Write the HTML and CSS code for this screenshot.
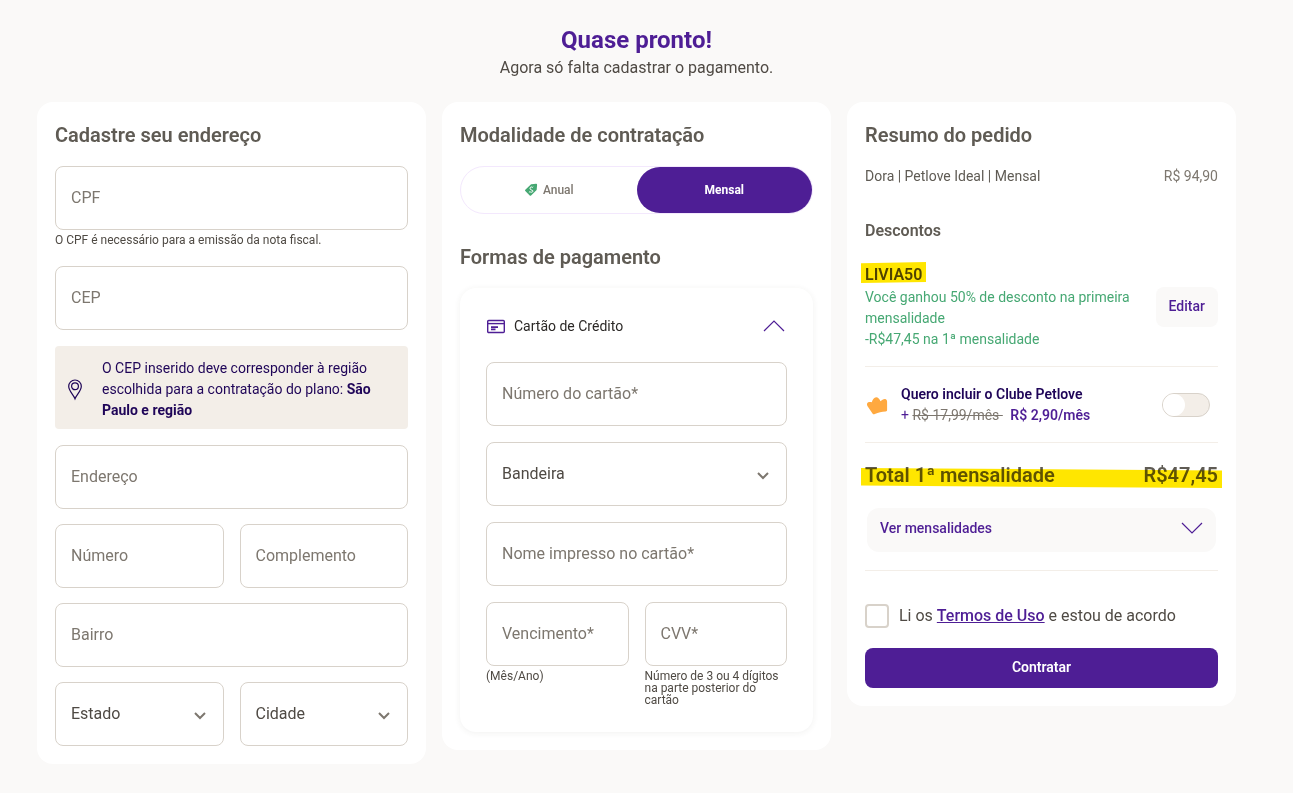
FILE: index.html
```html
<!DOCTYPE html>
<html lang="pt-BR">
	<head>
		<meta charset="UTF-8">
		<meta name="viewport" content="width=device-width, initial-scale=1.0">
		<title>Pagamento</title>
		<link rel="stylesheet" href="styles.css">
	</head>
	<body>

	<header class="pageHeader">
		<h1>Quase pronto!</h1>
		<p>Agora só falta cadastrar o pagamento.</p>
	</header>

	<main class="columns">

		<!-- endereco -->
		<section class="card">
			<h2>Cadastre seu endereço</h2>
			<input class="field" type="text" aria-label="CPF" placeholder="CPF">
			<p class="hint">O CPF é necessário para a emissão da nota fiscal.</p>
			<input class="field cep" type="text" aria-label="CEP" placeholder="CEP">

			<div class="notice">
				<svg class="pin" width="16" height="22" viewBox="0 0 16 22" fill="none" stroke="#1f0558" stroke-width="1.2">
					<path d="M8 19.800C6.500 15.800 1.700 12 1.700 7.300a6.300 6.300 0 0 1 12.600 0c0 4.700-4.800 8.500-6.300 12.500z"/>
					<circle cx="8" cy="7.300" r="3.400"/>
				</svg>
				<p>O CEP inserido deve corresponder à região escolhida para a contratação do plano: <b>São Paulo e região</b></p>
			</div>

			<div class="addressFields">
				<input class="field" type="text" aria-label="Endereço" placeholder="Endereço">
				<div class="pair">
					<input class="field" type="text" aria-label="Número" placeholder="Número">
					<input class="field" type="text" aria-label="Complemento" placeholder="Complemento">
				</div>
				<input class="field" type="text" aria-label="Bairro" placeholder="Bairro">
				<div class="pair">
					<div class="selectBox">
						<select class="field" aria-label="Estado"><option>Estado</option></select>
						<svg width="12" height="8" viewBox="0 0 12 8"><path d="M1 1l5 5 5-5"/></svg>
					</div>
					<div class="selectBox">
						<select class="field" aria-label="Cidade"><option>Cidade</option></select>
						<svg width="12" height="8" viewBox="0 0 12 8"><path d="M1 1l5 5 5-5"/></svg>
					</div>
				</div>
			</div>
		</section>

		<!-- pagamento -->
		<section class="card">
			<h2>Modalidade de contratação</h2>
			<div class="switcher">
				<button type="button">
					<svg width="14" height="14" viewBox="0 0 14 14">
						<path d="M7.500 1.200L12 .8a1 1 0 0 1 1.100 1.100l-.4 4.600c0 .3-.1.500-.3.700l-5.300 5.300a1 1 0 0 1-1.400 0L1.300 8.100a1 1 0 0 1 0-1.400l5.500-5.200c.2-.2.400-.3.700-.3z" fill="#46a873"/>
						<path d="M8.600 4.300C7 3.300 5.300 4.700 6.200 6.100s2.900.8 2.700 2.100-2 1.300-3.200.4M9.100 3.800l-.7.7M5.700 8.900l-.8.700" fill="none" stroke="#fff" stroke-width="1"/>
					</svg>
					Anual
				</button>
				<button type="button" class="active">Mensal</button>
			</div>

			<h2 class="payTitle">Formas de pagamento</h2>
			<div class="payBox">
				<button type="button" class="payHead">
					<svg width="20" height="20" viewBox="0 0 20 20" fill="none" stroke="#4e1e95" stroke-width="1.400">
						<rect x="1.700" y="4.500" width="16.600" height="12" rx="1"/>
						<path d="M2 7.600h16"/>
						<path d="M5 11.200h7M5 13.400h4.500" stroke-width="1.800"/>
					</svg>
					<span>Cartão de Crédito</span>
					<svg class="arrow" width="22" height="12" viewBox="0 0 22 12"><path d="M1 11L11 1l10 10"/></svg>
				</button>

				<div class="payFields">
					<input class="field" type="text" aria-label="Número do cartão" placeholder="Número do cartão*">
					<div class="selectBox">
						<select class="field" aria-label="Bandeira"><option>Bandeira</option></select>
						<svg width="12" height="8" viewBox="0 0 12 8"><path d="M1 1l5 5 5-5"/></svg>
					</div>
					<input class="field" type="text" aria-label="Nome impresso no cartão" placeholder="Nome impresso no cartão*">
					<div class="pair">
						<div>
							<input class="field" type="text" aria-label="Vencimento" placeholder="Vencimento*">
							<p class="hint">(Mês/Ano)</p>
						</div>
						<div>
							<input class="field" type="text" aria-label="CVV" placeholder="CVV*">
							<p class="hint">Número de 3 ou 4 dígitos na parte posterior do cartão</p>
						</div>
					</div>
				</div>
			</div>
		</section>

		<!-- resumo -->
		<section class="card">
			<h2>Resumo do pedido</h2>
			<div class="plan">
				<span>Dora | Petlove Ideal | Mensal</span>
				<span class="price">R$ 94,90</span>
			</div>

			<h3>Descontos</h3>
			<div class="coupon">
				<div>
					<h4><span class="marker">LIVIA50</span></h4>
					<p>Você ganhou 50% de desconto na primeira mensalidade<br>-R$47,45 na 1ª mensalidade</p>
				</div>
				<button type="button" class="edit">Editar</button>
			</div>

			<div class="club">
				<svg width="24" height="22" viewBox="0 0 24 22">
					<path d="M2.100 9.500c.6-1.500 2.900-1.800 4.700-1.200.8-2.800 2.400-4.900 4.300-5 2 0 3.600 1.700 4.400 4 1.200-1.600 3-2.500 4.500-2.400 1.500.2 2.100 1.300 2.100 2.800v8.100c0 1-.5 1.500-1.500 1.700-4 .2-7 .8-10.800 2.600-1 .4-1.700.2-2.300-.7L2.400 12c-.4-.9-.6-1.700-.3-2.500z" fill="#ffa940"/>
				</svg>
				<label for="club">
					<b>Quero incluir o Clube Petlove</b>
					<span class="clubPrice">+ <s>R$ 17,99/mês&nbsp;</s> <b>R$ 2,90/mês</b></span>
				</label>
				<input type="checkbox" id="club" class="toggle">
			</div>

			<div class="total marker">
				<span>Total 1ª mensalidade</span>
				<span>R$47,45</span>
			</div>

			<button type="button" class="months">
				<span>Ver mensalidades</span>
				<svg class="arrow" width="22" height="12" viewBox="0 0 22 12"><path d="M1 1l10 10L21 1"/></svg>
			</button>

			<div class="terms">
				<input type="checkbox" id="terms">
				<label for="terms">Li os <a href="#">Termos de Uso</a> e estou de acordo</label>
			</div>
			<button type="submit" class="submit">Contratar</button>
		</section>

	</main>
	</body>
</html>
```

FILE: styles.css
```css
* {
  margin: 0;
  padding: 0;
  box-sizing: border-box;
}

body {
  background-color: #faf9f8;
  color: #5f5b54;
  font-family: Roboto, "Liberation Sans", sans-serif;
  font-size: 14px;
  line-height: 21px;
  padding: 22px 57px 28px 37px;
}

button, input, select {
  font-family: inherit;
  font-size: inherit;
}

button {
  border: 0;
  background: none;
  cursor: pointer;
}

.pageHeader {
  text-align: center;
  margin-bottom: 24px;
}

.pageHeader h1 {
  color: #4e1e95;
  font-size: 24px;
  line-height: 36px;
}

.pageHeader p {
  color: #4f4a44;
  font-size: 16px;
  line-height: 20px;
}

.columns {
  display: grid;
  grid-template-columns: repeat(3, minmax(0, 1fr));
  gap: 16px;
  align-items: start;
}

.card {
  background: #fff;
  border-radius: 16px;
  padding: 18px;
}

h2 {
  font-size: 20px;
  line-height: 30px;
  font-weight: 600;
  margin-bottom: 16px;
}

/* fields */
.field {
  display: block;
  width: 100%;
  height: 64px;
  padding: 0 15px 2px;
  border: 1px solid #d8d2ca;
  border-radius: 8px;
  background: #fff;
  color: #4f4a44;
  font-size: 16px;
}

.field::placeholder {
  color: #7d776f;
  opacity: 1;
}

.pair {
  display: grid;
  grid-template-columns: repeat(2, minmax(0, 1fr));
  gap: 16px;
}

.selectBox {
  position: relative;
}

.selectBox select {
  appearance: none;
}

.selectBox svg {
  position: absolute;
  right: 18px;
  top: 30px;
  fill: none;
  stroke: #7d776f;
  stroke-width: 2;
  pointer-events: none;
}

.hint {
  color: #4f4a44;
  font-size: 12px;
  line-height: 12px;
  padding-top: 4px;
}

.cep {
  margin-top: 20px;
}

.notice {
  display: flex;
  align-items: center;
  gap: 19px;
  margin: 16px 0;
  padding: 12px 16px 8px 12px;
  border-radius: 4px;
  background: #f3eee8;
  color: #1f0558;
}

.pin {
  flex: none;
}

.addressFields {
  display: grid;
  gap: 15px;
}

/* anual / mensal */
.switcher {
  display: flex;
  height: 48px;
  border: 1px solid #f3e8fd;
  border-radius: 24px;
}

.switcher button {
  flex: 1;
  display: flex;
  align-items: center;
  justify-content: center;
  gap: 5px;
  border-radius: 24px;
  color: #7d776f;
  font-size: 12px;
  font-weight: 500;
}

.switcher .active {
  background: #4e1e95;
  color: #fff;
  font-weight: 700;
}

.payTitle {
  margin-top: 28px;
}

.payBox {
  padding: 26px;
  border-radius: 16px;
  box-shadow: 0 1px 6px rgba(60, 50, 40, 0.07);
}

.payHead {
  display: flex;
  align-items: center;
  gap: 8px;
  width: 100%;
  height: 24px;
  margin-bottom: 24px;
  padding-right: 2px;
  color: #2b2826;
}

.arrow {
  margin-left: auto;
  fill: none;
  stroke: #4e1e95;
  stroke-width: 1.2;
}

.payFields {
  display: grid;
  gap: 16px;
}

/* resumo */
.plan {
  display: flex;
  justify-content: space-between;
}

.price {
  color: #7d776f;
}

h3 {
  font-size: 16px;
  line-height: 24px;
  font-weight: 600;
  margin: 32px 0 20px;
}

.coupon {
  display: flex;
  align-items: center;
  justify-content: space-between;
  gap: 16px;
  color: #46a873;
  padding-bottom: 16px;
}

.coupon h4 {
  color: #4f4a44;
  font-size: 16px;
  line-height: 24px;
  font-weight: 600;
}

.marker {
  position: relative;
}

/* highlighter pen over the text */
.marker::after {
  content: "";
  position: absolute;
  top: -3px;
  bottom: 1px;
  left: -4px;
  right: -4px;
  background: #ffe600;
  mix-blend-mode: multiply;
  clip-path: polygon(0 6%, 100% 0, 100% 95%, 0 100%);
  pointer-events: none;
}

.edit {
  flex: none;
  height: 40px;
  padding: 0 13px 2px;
  border-radius: 8px;
  background: #faf9f8;
  color: #4e1e95;
  font-weight: 500;
}

.club {
  display: flex;
  align-items: center;
  padding: 17px 8px 16px 0;
  border-top: 1px solid #f3eee8;
  border-bottom: 1px solid #f3eee8;
}

.club label {
  margin-left: 12px;
  color: #1f0558;
}

.club b {
  font-weight: 600;
}

.clubPrice {
  display: block;
  color: #4e1e95;
}

.clubPrice s {
  color: #7d776f;
  margin-right: 4px;
}

.toggle {
  appearance: none;
  width: 48px;
  height: 24px;
  margin-left: auto;
  border: 1px solid #d8d2ca;
  border-radius: 12px;
  background: #f3eee8;
}

.toggle::before {
  content: "";
  display: block;
  width: 22px;
  height: 22px;
  border-radius: 50%;
  background: #fff;
}

.toggle:checked {
  background: #4e1e95;
}

.toggle:checked::before {
  margin-left: auto;
}

.total {
  display: flex;
  justify-content: space-between;
  margin: 17px 0 18px;
  font-size: 20px;
  line-height: 30px;
  font-weight: 600;
}

.total::after {
  top: 8px;
  bottom: 2px;
  clip-path: polygon(0 0, 100% 12%, 100% 100%, 0 88%);
}

.months {
  display: flex;
  align-items: center;
  width: calc(100% - 4px);
  height: 44px;
  margin: 0 2px;
  padding: 0 13px 4px;
  border-radius: 12px;
  background: #faf9f8;
  color: #4e1e95;
  font-weight: 500;
}

.terms {
  display: flex;
  align-items: center;
  gap: 10px;
  margin: 18px 0 20px;
  padding-top: 33px;
  border-top: 1px solid #f3eee8;
  color: #4f4a44;
  font-size: 16px;
  line-height: 24px;
}

.terms input {
  appearance: none;
  width: 24px;
  height: 24px;
  border: 2px solid #d8d2ca;
  border-radius: 4px;
}

.terms input:checked {
  background: #4e1e95;
}

.terms a {
  color: #4e1e95;
  font-weight: 500;
}

.submit {
  display: block;
  width: 100%;
  height: 40px;
  padding-bottom: 2px;
  border-radius: 8px;
  background: #4e1e95;
  color: #fff;
  font-weight: 600;
}
```
